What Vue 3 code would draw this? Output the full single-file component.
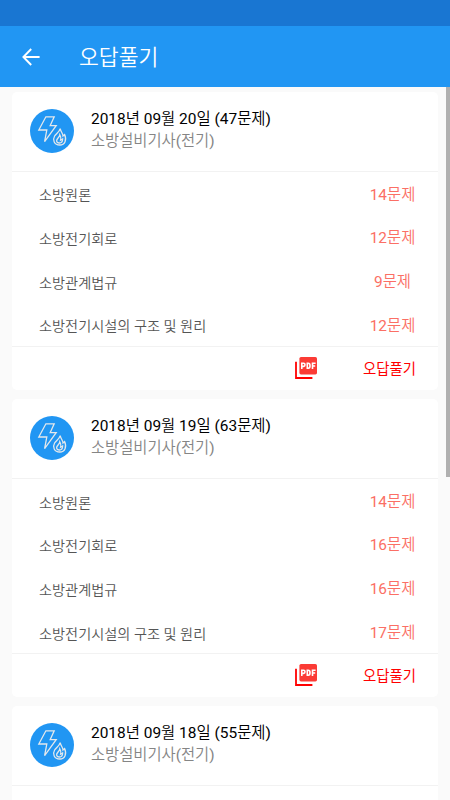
<script setup>
import { ref } from 'vue';

const jeongi = "소방설비기사(전기)";
const nalList = ref([
    {
        "title": "2018년 09월 20일 (47문제)",
        "subjects": [
            {"name": "소방원론", "count": 14},
            {"name": "소방전기회로", "count": 12},
            {"name": "소방관계법규", "count": 9},
            {"name": "소방전기시설의 구조 및 원리", "count": 12}
        ]
    },
    {
        "title": "2018년 09월 19일 (63문제)",
        "subjects": [
            {"name": "소방원론", "count": 14},
            {"name": "소방전기회로", "count": 16},
            {"name": "소방관계법규", "count": 16},
            {"name": "소방전기시설의 구조 및 원리", "count": 17}
        ]
    },
    {
        "title": "2018년 09월 18일 (55문제)",
        "subjects": []
    }
])
</script>
<template>
    <div class="screen">
        <div class="statusBar"></div>
        <header class="toolbar">
            <svg class="back" viewBox="0 0 18 18">
                <path d="M9.2 1 L1.4 9 L9.2 17 M1.6 9 H17.6" />
            </svg>
            <h1>오답풀기</h1>
        </header>
        <main class="list">
            <section class="card" v-for="nal in nalList" :key="nal.title">
                <div class="cardHead">
                    <svg class="badge" viewBox="0 0 44 44">
                        <circle cx="22" cy="22" r="22" fill="#2196f3" />
                        <path d="M15.9 7.8 H24.2 L20.2 16.6 H26.2 L14.6 32.6 L16.8 21 H8.8 Z" />
                        <path d="M30.2 19.6 C30.6 22.6 33 24.2 33 27 L34.6 25.6 C37 30.6 35 36 29.8 36 C24 36 22.4 30.8 24.6 27 C26 24.6 29.4 23 30.2 19.6 Z" />
                        <path d="M29.8 25.8 C29.6 28.6 26.4 29.6 26.6 32 C26.9 34 29 34 29.4 34 C31.4 34 32.6 32.8 32.6 30 L30.6 31.2 C31.1 29.4 30.8 27.4 29.8 25.8 Z" />
                    </svg>
                    <div class="headText">
                        <h2>{{ nal["title"] }}</h2>
                        <p>{{ jeongi }}</p>
                    </div>
                </div>
                <div class="subjects">
                    <div class="row" v-for="s in nal['subjects']" :key="s.name">
                        <span class="name">{{ s["name"] }}</span>
                        <span class="count">{{ s["count"] }}문제</span>
                    </div>
                </div>
                <div class="cardFoot" v-if="nal['subjects'].length > 0">
                    <svg class="pdf" viewBox="0 0 22 22">
                        <path d="M1 4.8 V21 H17.4" fill="none" stroke="#f00" stroke-width="1.8" />
                        <rect x="4.4" y="0" width="17.6" height="17.4" rx="1.6" fill="#fb3b35" />
                        <path d="M6.8 12 V6.2 H8.6 Q10 6.2 10 7.8 Q10 9.4 8.6 9.4 H7 M12.3 6.2 V11.2 H13.3 Q15 11.2 15 8.7 Q15 6.2 13.3 6.2 Z M17.5 12 V6.2 H20.6 M17.5 9 H20.2" fill="none" stroke="#fff" stroke-width="1.6" />
                    </svg>
                    <button>오답풀기</button>
                </div>
            </section>
        </main>
        <div class="scrollThumb"></div>
    </div>
</template>
<style>
body {
    margin: 0;
    background-color: #fafafa;
}
</style>
<style scoped>
.screen {
    position: relative;
    width: 450px;
    height: 800px;
    overflow: hidden;
    background-color: #fafafa;
    font-family: Roboto, "Noto Sans CJK KR DemiLight", "Noto Sans CJK KR", sans-serif;
}

.statusBar {
    height: 26px;
    background-color: #1976d2;
}

.toolbar {
    display: flex;
    align-items: center;
    height: 61px;
    padding-left: 22px;
    background-color: #2196f3;
    color: white;
}

.back {
    width: 18px;
    height: 18px;
    fill: none;
    stroke: white;
    stroke-width: 1.9;
}

.toolbar h1 {
    margin: 2px 0 0 39px;
    font-size: 21.6px;
    font-weight: 400;
    line-height: 32px;
}

.list {
    display: flex;
    flex-direction: column;
    gap: 9.2px;
    padding: 5px 12px 0;
}

.card {
    flex-shrink: 0;
    height: 298px;
    border-radius: 5px;
    background-color: white;
}

.cardHead {
    display: flex;
    box-sizing: border-box;
    height: 80px;
    padding: 17px 0 0 18px;
    border-bottom: 1px solid #f2f2f2;
}

.badge {
    width: 44px;
    height: 44px;
    fill: none;
    stroke: #e4e8ec;
    stroke-width: 1.3;
}

.badge circle {
    stroke: none;
}

.headText {
    margin: -1px 0 0 17px;
}

.headText h2,
.headText p {
    margin: 0;
    font-size: 15.45px;
    font-weight: 400;
    line-height: 22px;
}

.headText h2 {
    color: #000;
}

.headText p {
    font-size: 15.35px;
    color: #858585;
}

.subjects {
    height: 174px;
}

.row {
    display: flex;
    justify-content: space-between;
    height: 43.7px;
    padding: 0 12px 0 27px;
}

.name {
    padding-top: 12.4px;
    font-size: 14.2px;
    font-weight: 400;
    line-height: 22px;
    color: #555;
}

.count {
    width: 67px;
    padding-top: 11.6px;
    font-size: 15.4px;
    font-weight: 400;
    line-height: 22px;
    text-align: center;
    color: #fb6f65;
}

.cardFoot {
    display: flex;
    align-items: center;
    box-sizing: border-box;
    height: 43.5px;
    padding: 0 22px 0 283px;
    justify-content: space-between;
    border-top: 1px solid #f2f2f2;
}

.pdf {
    width: 22px;
    height: 22px;
}

.cardFoot button {
    padding: 0;
    border: none;
    background: none;
    font-family: "Noto Sans CJK KR", sans-serif;
    font-size: 14.4px;
    line-height: 22px;
    color: #f00;
}

.scrollThumb {
    position: absolute;
    top: 87px;
    right: 0;
    width: 4.5px;
    height: 390px;
    background-color: #b0b0b0;
}
</style>
